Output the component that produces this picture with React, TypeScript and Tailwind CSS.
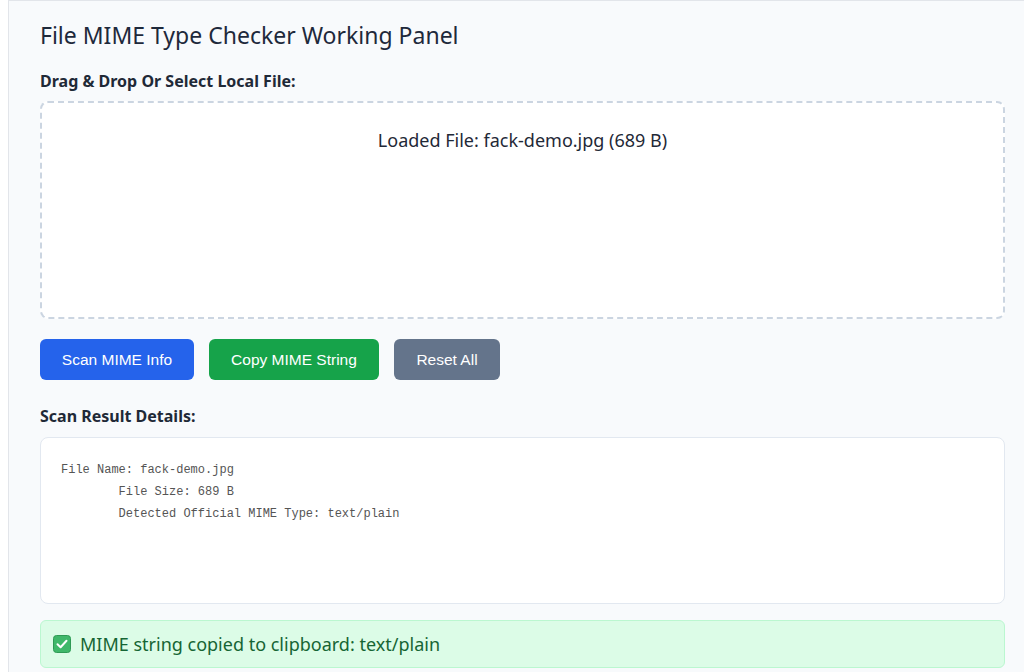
import React from "react";

const sans = { fontFamily: '"Noto Sans", "Open Sans", sans-serif' };

function CheckMark() {
  return (
    <svg width="18" height="18" viewBox="0 0 18 18" className="shrink-0">
      <rect x="0.5" y="0.5" width="17" height="17" rx="3" fill="#3fb86a" stroke="#2f9a55" />
      <path d="M4.5 9.2 L7.6 12.2 L13.5 5.8" fill="none" stroke="#ffffff" strokeWidth="2" strokeLinecap="round" strokeLinejoin="round" />
    </svg>
  );
}

export default function App() {
  const details = `File Name: fack-demo.jpg
        File Size: 689 B
        Detected Official MIME Type: text/plain`;

  return (
    <div className="min-h-screen bg-white pl-2" style={sans}>
      <div className="min-h-screen border-l border-t border-[#e2e5ea] bg-[#f8fafc] pl-[31px] pr-[19px] pt-[18px] pb-6">
        <h2 className="text-[23px] leading-8 text-[#1e293b]">File MIME Type Checker Working Panel</h2>

        <div className="mt-[20px] text-[16px] font-bold leading-5 text-[#1f2937]">Drag &amp; Drop Or Select Local File:</div>

        <div className="mt-[10px] h-[218px] rounded-lg border-2 border-dashed border-[#cbd5e1] bg-white pt-[23px] text-center text-[18px] leading-7 text-[#1f2937]">
          Loaded File: fack-demo.jpg (689 B)
        </div>

        <div className="mt-[20px] flex gap-[15px]" style={{ fontFamily: '"Liberation Sans", Arial, sans-serif' }}>
          <button className="h-[41px] w-[154px] rounded-md bg-[#2563eb] text-[15.5px] text-white">Scan MIME Info</button>
          <button className="h-[41px] w-[170px] rounded-md bg-[#16a34a] text-[15.5px] text-white">Copy MIME String</button>
          <button className="h-[41px] w-[106px] rounded-md bg-[#64748b] text-[15.5px] text-white">Reset All</button>
        </div>

        <div className="mt-[26px] text-[16px] font-bold leading-5 text-[#1f2937]">Scan Result Details:</div>

        <div className="mt-[11px] h-[167px] rounded-lg border border-[#e2e8f0] bg-white px-5 pt-[21px]">
          <pre className="text-[12px] leading-[22px] text-[#555]" style={{ fontFamily: '"Liberation Mono", "DejaVu Sans Mono", monospace' }}>{details}</pre>
        </div>

        <div className="mt-[16px] flex h-[48px] items-center gap-[9px] rounded-md border border-[#bbf7d0] bg-[#dcfce7] px-[12px] text-[18px] text-[#166534]">
          <CheckMark />
          <span>MIME string copied to clipboard: text/plain</span>
        </div>
      </div>
    </div>
  );
}
